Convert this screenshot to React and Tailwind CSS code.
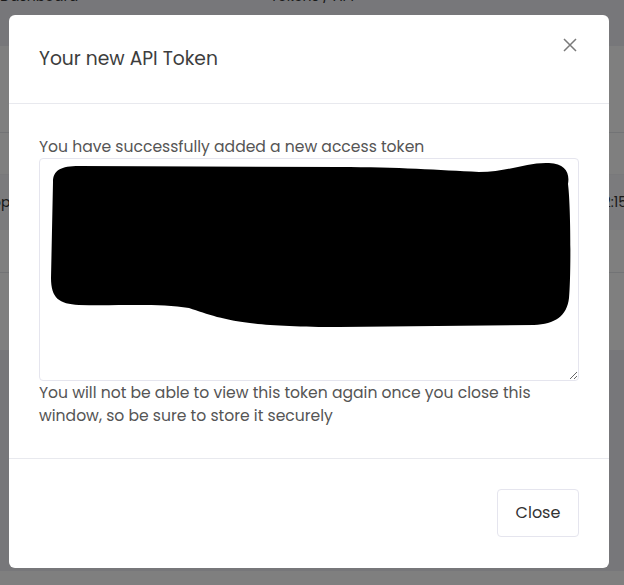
import React from 'react';

function BackgroundPage() {
    return (
        <div className="min-h-[585px] bg-[#eeeff5] text-[#333] text-[14px]" style={{fontFamily: 'Poppins, "Open Sans", sans-serif'}}>
            <div className="h-[60px] -mt-[14px] flex justify-between">
                <span>Dashboard</span>
                <span className="mr-[270px]">Tokens / API</span>
            </div>
            <div className="bg-white">
                <div className="h-[87px] border-b border-[#e5e7eb]"></div>
                <div className="h-[42px] border-b border-[#f2f3f6]"></div>
                <div className="h-[55px] bg-[#f7f7fa] flex items-center justify-between -ml-[38px] -mr-[3px]">
                    <span>Laptop</span>
                    <span>12:15</span>
                </div>
                <div className="h-[43px] border-b border-[#e5e7eb]"></div>
                <div className="h-[77px]"></div>
            </div>
        </div>
    );
}

function Redaction() {
    return (
        <svg className="absolute left-0 top-0 pointer-events-none" width="540" height="222" viewBox="0 0 540 222">
            <path
                d="M 14 24 C 14 12, 22 8, 40 8 L 300 9 C 360 9, 400 12, 440 14 C 470 14, 488 4, 510 5 C 526 6, 531 14, 529 26 C 532 50, 532 120, 530 140 C 528 158, 516 166, 495 167 L 300 169 C 200 169, 180 160, 150 150 C 120 145, 80 148, 40 147 C 20 146, 12 140, 12 120 Z"
                fill="#000"
            />
        </svg>
    );
}

export default function App() {
    return (
        <div className="relative w-[624px] h-[585px] overflow-hidden">
            <BackgroundPage/>

            {/* modal overlay */}
            <div className="absolute inset-0 bg-black/50 pt-[15px] pl-[9px]" style={{fontFamily: 'Poppins, "Open Sans", sans-serif'}}>
                <div className="relative w-[600px] bg-white rounded-[6px]">
                    <div className="h-[89px] flex items-center px-[30px] border-b border-[#e8e9ee]">
                        <h2 className="text-[18.7px] text-[#3d3d3d] font-normal">Your new API Token</h2>
                    </div>
                    <button className="absolute right-[26px] top-[17px] p-[5px] text-[#7a7a7a]">
                        <svg width="16" height="16" viewBox="0 0 16 16" fill="none" stroke="currentColor" strokeWidth="1.5">
                            <path d="M2 2 L14 14 M14 2 L2 14"/>
                        </svg>
                    </button>

                    <div className="pt-[31px] pb-[31px] px-[30px] text-[15.6px] leading-[23px] text-[#555]">
                        <p>You have successfully added a new access token</p>
                        <div className="relative">
                            <textarea
                                readOnly
                                className="block w-[540px] h-[223px] border border-[#e5e5ee] rounded-[4px] resize-y outline-none"
                            />
                            <Redaction/>
                        </div>
                        <p>You will not be able to view this token again once you close this window, so be sure to store it securely</p>
                    </div>

                    <div className="border-t border-[#e8e9ee] flex justify-end px-[30px] pt-[30px] pb-[31px]">
                        <button className="h-[48px] w-[82px] border border-[#e5e5ee] rounded-[4px] text-[16px] text-[#333]">
                            Close
                        </button>
                    </div>
                </div>
            </div>
        </div>
    );
}
